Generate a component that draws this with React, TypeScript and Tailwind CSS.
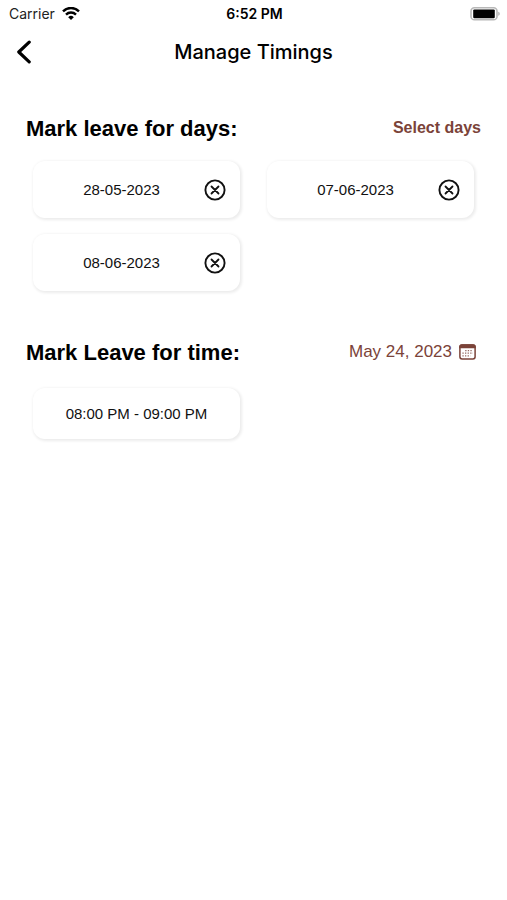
import type { ReactNode } from "react";

const leaveDays = ["28-05-2023", "07-06-2023", "08-06-2023"];
const leaveTimes = ["08:00 PM - 09:00 PM"];

function WifiIcon() {
  return (
    <svg width="18" height="14" viewBox="0 0 18 14" fill="none" stroke="#000" strokeWidth="2.4" aria-hidden="true">
      <path d="M1 4.3 A11.3 11.3 0 0 1 17 4.3" />
      <path d="M4 7.6 A7.1 7.1 0 0 1 14 7.6" />
      <path d="M9 13 L6.2 10.2 A4 4 0 0 1 11.8 10.2 Z" fill="#000" stroke="none" />
    </svg>
  );
}

function BatteryIcon() {
  return (
    <svg width="30" height="14" viewBox="0 0 30 14" aria-hidden="true">
      <rect x="1" y="0.8" width="26" height="12" rx="3.4" fill="#fff" stroke="#b8b8b8" strokeWidth="1.6" />
      <rect x="3.2" y="2.4" width="21.6" height="8.8" rx="1.2" fill="#000" />
      <path d="M28.2 4.8 C30.3 5.4 30.3 8.2 28.2 8.8 Z" fill="#b8b8b8" />
    </svg>
  );
}

function BackIcon() {
  return (
    <svg width="16" height="24" viewBox="0 0 16 24" fill="none" stroke="#000" strokeWidth="3.2" strokeLinecap="round" strokeLinejoin="round" aria-hidden="true">
      <path d="M13.2 2.2 L2.8 12 L13.2 21.8" />
    </svg>
  );
}

function CloseCircleIcon() {
  return (
    <svg width="22" height="22" viewBox="0 0 22 22" fill="none" stroke="#111" strokeLinecap="round" aria-hidden="true">
      <circle cx="11" cy="11" r="9.6" strokeWidth="1.9" />
      <path d="M7.5 7.5 L14.5 14.5 M14.5 7.5 L7.5 14.5" strokeWidth="1.8" />
    </svg>
  );
}

function CalendarIcon() {
  return (
    <svg width="17" height="16" viewBox="0 0 17 16" fill="none" aria-hidden="true">
      <rect x="0.9" y="0.9" width="15.2" height="14" rx="2.2" stroke="#7b4339" strokeWidth="1.5" />
      <path d="M0.2 4.2 V2.8 A2.6 2.6 0 0 1 2.8 0.2 H14.2 A2.6 2.6 0 0 1 16.8 2.8 V4.2 Z" fill="#7b4339" />
      <path d="M6.2 6.6 H14 M3.4 9.2 H14 M3.4 11.8 H11.4" stroke="#7b4339" strokeOpacity="0.8" strokeWidth="1.3" strokeDasharray="1.3 1.3" />
    </svg>
  );
}

function Card({ children }: { children: ReactNode }) {
  return (
    <li className="flex items-center rounded-xl bg-white text-[15px] leading-5 text-[#111] shadow-[1px_1px_3px_1px_rgba(0,0,0,0.08)]">
      {children}
    </li>
  );
}

export default function App() {
  return (
    <div className="min-h-screen bg-white font-['Liberation_Sans',Arial,sans-serif] text-black">
      <div className="grid h-7 grid-cols-3 items-center pr-[7px] pl-[9px] font-['Inter',sans-serif] text-sm">
        <div className="flex items-center gap-[7px] text-[#222]">
          <span>Carrier</span>
          <WifiIcon />
        </div>
        <span className="text-center font-semibold">6:52 PM</span>
        <div className="flex justify-end">
          <BatteryIcon />
        </div>
      </div>

      <header className="grid h-12 grid-cols-[32px_1fr_32px] items-center px-4">
        <button type="button" aria-label="Back" className="cursor-pointer">
          <BackIcon />
        </button>
        <h1 className="text-center font-['Inter',sans-serif] text-xl font-medium">Manage Timings</h1>
      </header>

      <main className="px-[26px] pt-9">
        <section>
          <div className="flex h-8 items-center justify-between">
            <h2 className="text-[22px] font-bold">Mark leave for days:</h2>
            <button type="button" className="cursor-pointer text-base font-bold text-[#7b4339]">
              Select days
            </button>
          </div>
          <ul className="mt-[17px] grid grid-cols-2 gap-x-[27px] gap-y-4 px-[7px]">
            {leaveDays.map((day) => (
              <Card key={day}>
                <span className="flex h-[57px] flex-1 items-center justify-center pl-[6px]">{day}</span>
                <button type="button" aria-label={`Remove ${day}`} className="mr-[14px] cursor-pointer">
                  <CloseCircleIcon />
                </button>
              </Card>
            ))}
          </ul>
        </section>

        <section className="mt-[45px]">
          <div className="flex h-8 items-center justify-between">
            <h2 className="text-[22px] font-bold">Mark Leave for time:</h2>
            <button type="button" className="mr-[5px] flex cursor-pointer items-center gap-[7px] text-[17px] text-[#7b4339]">
              May 24, 2023
              <CalendarIcon />
            </button>
          </div>
          <ul className="mt-5 grid grid-cols-2 gap-x-[27px] gap-y-4 px-[7px]">
            {leaveTimes.map((time) => (
              <Card key={time}>
                <span className="flex h-[51px] flex-1 items-center justify-center">{time}</span>
              </Card>
            ))}
          </ul>
        </section>
      </main>
    </div>
  );
}
